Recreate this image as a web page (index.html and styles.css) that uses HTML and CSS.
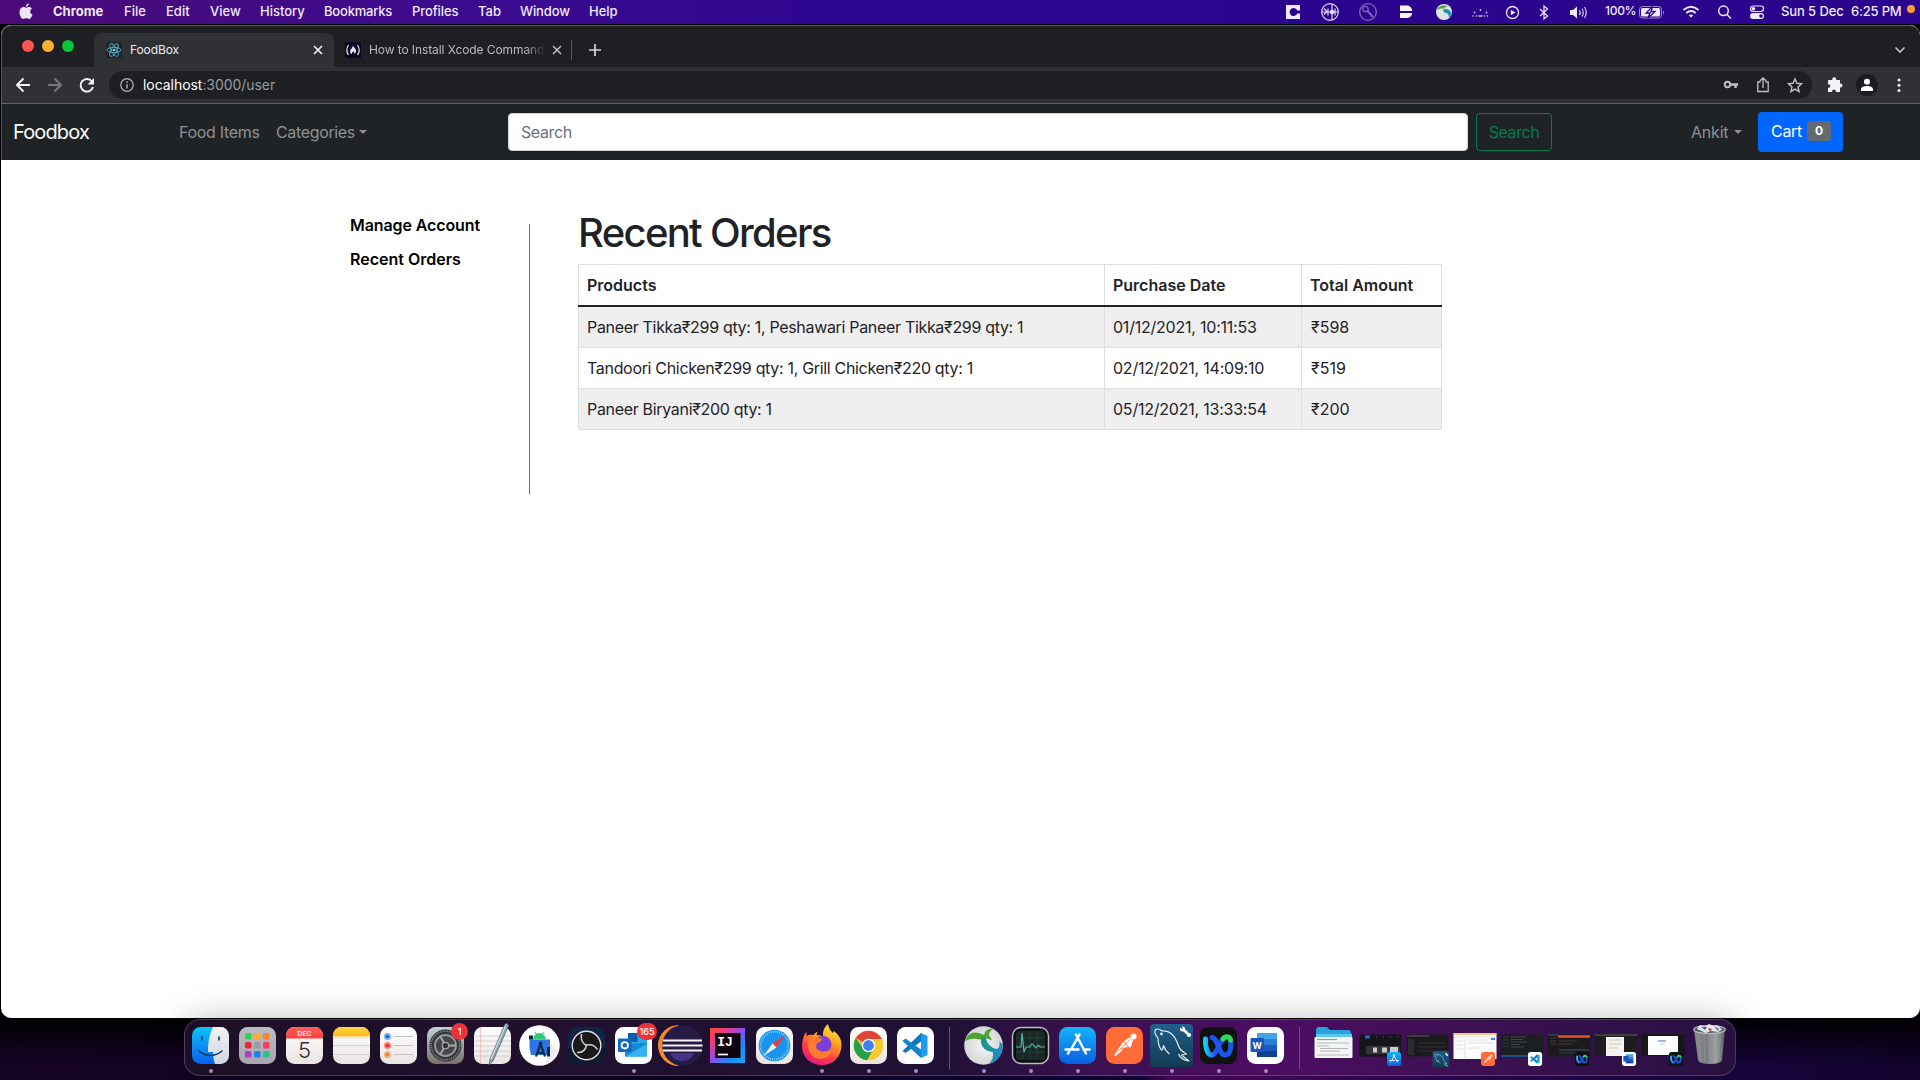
FILE: index.html
```html
<!DOCTYPE html>
<html lang="en">
<head>
<meta charset="utf-8">
<title>FoodBox</title>
<link rel="stylesheet" href="styles.css">
</head>
<body>
<svg class="defs" width="0" height="0">
  <defs>
    <linearGradient id="gFinder" x1="0" y1="0" x2="0" y2="1"><stop offset="0" stop-color="#0bc4fb"/><stop offset="1" stop-color="#0a5ff0"/></linearGradient>
    <linearGradient id="gFace" x1="0" y1="0" x2="0" y2="1"><stop offset="0" stop-color="#f2f3f5"/><stop offset="1" stop-color="#cfd6e0"/></linearGradient>
    <linearGradient id="gLaunch" x1="0" y1="0" x2="0" y2="1"><stop offset="0" stop-color="#bcbac2"/><stop offset="1" stop-color="#a9a5b2"/></linearGradient>
    <linearGradient id="gPaper" x1="0" y1="0" x2="0" y2="1"><stop offset="0" stop-color="#fff"/><stop offset="1" stop-color="#e9e4e2"/></linearGradient>
    <linearGradient id="gYellow" x1="0" y1="0" x2="0" y2="1"><stop offset="0" stop-color="#fdd33f"/><stop offset="1" stop-color="#fbb81b"/></linearGradient>
    <linearGradient id="gRed" x1="0" y1="0" x2="0" y2="1"><stop offset="0" stop-color="#ff5d57"/><stop offset="1" stop-color="#fb403f"/></linearGradient>
    <linearGradient id="gGear" x1="0" y1="0" x2="0" y2="1"><stop offset="0" stop-color="#c3d2d9"/><stop offset="1" stop-color="#77716b"/></linearGradient>
    <linearGradient id="gPen" x1="0" y1="0" x2="1" y2="1"><stop offset="0" stop-color="#c9d6dc"/><stop offset="1" stop-color="#5d7380"/></linearGradient>
    <linearGradient id="gStore" x1="0" y1="0" x2="0" y2="1"><stop offset="0" stop-color="#14b4fa"/><stop offset="1" stop-color="#0a5fe0"/></linearGradient>
    <linearGradient id="gIj" x1="0" y1="0" x2="1" y2="1"><stop offset="0" stop-color="#fb4a2f"/><stop offset=".25" stop-color="#f23a86"/><stop offset=".5" stop-color="#8a4df0"/><stop offset=".75" stop-color="#1592f7"/><stop offset="1" stop-color="#1fa2f8"/></linearGradient>
    <linearGradient id="gFox" x1=".8" y1="0" x2=".3" y2="1"><stop offset="0" stop-color="#fff04b"/><stop offset=".35" stop-color="#ffa51f"/><stop offset=".7" stop-color="#fb3f45"/><stop offset="1" stop-color="#e31587"/></linearGradient>
    <linearGradient id="gSql" x1="0" y1="0" x2="0" y2="1"><stop offset="0" stop-color="#20608a"/><stop offset="1" stop-color="#123a53"/></linearGradient>
    <linearGradient id="gWx" x1="0" y1="0" x2="1" y2="0"><stop offset="0" stop-color="#16c8f5"/><stop offset=".5" stop-color="#1c56f0"/><stop offset="1" stop-color="#1b3fe0"/></linearGradient>
    <linearGradient id="gBin" x1="0" y1="0" x2="1" y2="0"><stop offset="0" stop-color="#8c8d90"/><stop offset=".4" stop-color="#7b7c7f"/><stop offset=".7" stop-color="#a0a1a3"/><stop offset="1" stop-color="#5b5c60"/></linearGradient>
    <radialGradient id="gGlobe"><stop offset="0" stop-color="#f5f6f4"/><stop offset="1" stop-color="#d3d7d6"/></radialGradient>

    <g id="storeMark" fill="none" stroke="#fff" stroke-width="2.4" stroke-linecap="round"><path d="M22 15.500 32 34.500M25.500 15.500 17 30.500M11.500 30.500H24.500M29.500 30.500H35.500M14 34.500 15 33"/></g>
    <g id="postman"><circle cx="32.500" cy="17.500" r="3" fill="#fff"/><path d="m13 36.500 9-13.500 6-4.500 4 2.500-2 7-6.500 1-8.500 8z" fill="#fff"/><path d="m17 32.500 12-12M19.500 30.500l8-2.500M23 23l4.500 5" stroke="#ff6c37" fill="none" stroke-width=".9"/></g>
    <g id="vsMark"><path d="M29 14 35.500 17v19L29 39z" fill="#1f9cf0"/><path d="M29 14v8.500L13.500 34 10.500 32z" fill="#0f77bd"/><path d="M29 39v-8.500L13.500 19.500 10.500 22z" fill="#1184d0"/></g>
    <g id="webexMark" fill="none" stroke-linecap="round"><path d="M10.500 20C10 27 12 36 17 36s7.500-15 13-17.500" stroke="url(#gWx)" stroke-width="5"/><path d="M17 18.500C23 19 24 36 30 36s6.500-9 5.500-15" stroke="#1b57ee" stroke-width="5"/><path d="M28 20c2.500-3.500 7-2.500 7.500 1" stroke="#2edb5b" stroke-width="5"/></g>
    <g id="dolphin" fill="none" stroke="#dfeaf1" stroke-width="1.200" stroke-linejoin="round"><path d="M10 19C7 16 6 12 7.500 10.500c2-1 5 0 6.500 1.500 7-1 12 4 15 11 1 3 2 6 4 8 2 2 4 3 5.500 4l-5 1 7.500 6c-6-1-9-3-10.500-7M10 19c0 4 1 9 3.500 12 1 .5 1.500-2 2-4.500 1 3.500 3 6 6 8.500"/><circle cx="13.500" cy="15" r=".8"/></g>
    <g id="wordMark"><path d="M15 14h20v6H15z" fill="#41a5ee"/><path d="M15 20h20v6H15z" fill="#2b7cd3"/><path d="M15 26h20v6H15z" fill="#185abd"/><path d="M15 32h20v6H15z" fill="#103f91"/><rect x="8.500" y="19" width="13.500" height="14" rx="1" fill="#1b55b5"/></g>
  </defs>
</svg>

<header class="menubar">
  <svg class="apple" viewBox="0 0 14 17" width="14" height="17"><path d="M9.800.5c.1 1.700-1.300 3.200-2.900 3.200C6.700 2.100 8.200.6 9.800.5zM7 4.800c.7 0 1.600-.8 3-.8 1.200 0 2.400.6 3 1.600-2.600 1.500-2.200 5 .5 6.100-.6 1.800-2 4.300-3.500 4.300-1.100 0-1.500-.7-2.900-.7-1.400 0-1.800.7-2.900.7C2.500 16 .5 12.400.5 9.300.5 6 2.600 4.100 4.600 4.100c1.100 0 1.900.7 2.400.7z" fill="#ece6f4"/></svg>
  <nav class="menus">
    <b class="m-chrome">Chrome</b><span class="m-file">File</span><span class="m-edit">Edit</span><span class="m-view">View</span><span class="m-history">History</span><span class="m-book">Bookmarks</span><span class="m-prof">Profiles</span><span class="m-tab">Tab</span><span class="m-win">Window</span><span>Help</span>
  </nav>
  <svg class="status" viewBox="1280 0 320 24" width="320" height="24">
    <rect x="1286" y="5" width="14" height="14" fill="#efeaf7"/><path d="M1300 10.500h-2.700a4 4 0 1 0 0 3h2.700" fill="#2c0491"/>
    <g fill="none" stroke="#e4dcf2" stroke-width="1.200"><circle cx="1330" cy="12" r="8.300"/><path d="M1332 4v16M1322 12h16M1324 8.500l3 3-3 3M1328 8.500v7M1335 8.500v7"/><circle cx="1332" cy="12" r="1.600" fill="#e4dcf2"/></g>
    <g fill="none" stroke="#8065bd" stroke-width="1.300"><circle cx="1368" cy="12" r="8.300"/><circle cx="1365.500" cy="9" r="2.700"/><path d="m1367.500 11 5.500 6" stroke-width="2"/></g>
    <path d="M1400 5.500h6.500c3 0 5.500 2 5.700 5.500H1400zM1400 13h12.200c-.3 3-2.700 5-5.700 5h-6.500z" fill="#f6f2fb"/>
    <circle cx="1444" cy="12" r="8" fill="#dde4e3"/><path d="M1437 10c1-4 7-6 11-3-3-1-4 1-4 2-3-1-5 0-7 1z" fill="#4fa637"/><path d="M1443 10c2-2 7-1 8 3 0 2-1 4-2 5 0-3-1-5-3-5-1 0-3-2-3-3z" fill="#1e8dba"/>
    <g fill="#d4c9ea"><circle cx="1473" cy="16" r=".8"/><circle cx="1476.500" cy="16" r=".8"/><path d="M1478.500 15.300h4v1.400h-4z"/><circle cx="1484.500" cy="16" r=".8"/><circle cx="1487.500" cy="16" r=".8"/><circle cx="1474.500" cy="12.500" r=".9"/><circle cx="1486.500" cy="12.500" r=".9"/><circle cx="1480.500" cy="10" r=".9"/></g>
    <circle cx="1512.500" cy="12.500" r="6" fill="none" stroke="#eee8f7" stroke-width="1.300"/><path d="m1510.800 9.700 4.600 2.800-4.600 2.800z" fill="#eee8f7"/>
    <path d="m1540 9 7.500 7-3.500 3V6l3.500 3-7.500 7" fill="none" stroke="#eee8f7" stroke-width="1.200"/>
    <path d="M1570 10h3l4-3.500v12l-4-3.500h-3z" fill="#eee8f7"/><path d="M1579.500 10q1.500 2.500 0 5M1582 8.500q2.500 4 0 8M1584.500 7q3.500 5.500 0 11" fill="none" stroke="#cfc3e8" stroke-width="1.200"/>
  </svg>
  <span class="pct">100%</span>
  <svg class="status2" viewBox="1638 0 134 24" width="134" height="24">
    <rect x="1639.500" y="6.500" width="22" height="11.500" rx="3" fill="none" stroke="#a18bd0"/><rect x="1641" y="8" width="19" height="8.500" rx="1.500" fill="#efe9f7"/><path d="M1663 10.500q2 2 0 4" fill="#a18bd0"/><path d="m1652.500 6.500-6.500 6.500h4l-2 5 7-6.500h-4z" fill="#efe9f7" stroke="#2b048f" stroke-width="1.300"/>
    <g fill="none" stroke="#eee8f7" stroke-width="2"><path d="M1683.500 10q7.500-6.500 15 0M1686.300 13q4.700-4 9.400 0"/></g><path d="m1688.800 15.300 2.200 2.500 2.200-2.500q-2.200-1.700-4.400 0z" fill="#eee8f7"/>
    <g fill="none" stroke="#eee8f7" stroke-width="1.500"><circle cx="1723.500" cy="10.800" r="4.800"/><path d="m1727 14.500 4 4"/></g>
    <rect x="1750.500" y="6" width="13" height="5.500" rx="2.700" fill="none" stroke="#eee8f7" stroke-width="1.200"/><circle cx="1753.500" cy="8.700" r="1.800" fill="#eee8f7"/><rect x="1750" y="13" width="14" height="6" rx="3" fill="#eee8f7"/><circle cx="1761" cy="16" r="1.800" fill="#2b048f"/>
  </svg>
  <span class="date">Sun 5 Dec</span><span class="time">6:25 PM</span><i class="rec"></i>
</header>

<main class="window">
  <div class="tabstrip">
    <div class="lights"><i class="red"></i><i class="amber"></i><i class="green"></i></div>
    <div class="tab">
      <svg viewBox="0 0 16 16" width="16" height="16"><rect width="16" height="16" rx="2" fill="#20232a"/><g fill="none" stroke="#4fb3cb" stroke-width=".9"><ellipse cx="8" cy="8" rx="7" ry="2.700"/><ellipse cx="8" cy="8" rx="7" ry="2.700" transform="rotate(60 8 8)"/><ellipse cx="8" cy="8" rx="7" ry="2.700" transform="rotate(120 8 8)"/></g><circle cx="8" cy="8" r="1.300" fill="#7fdcf0"/></svg>
      <span class="tab-title">FoodBox</span>
      <svg class="x" viewBox="0 0 10 10" width="10" height="10"><path d="m1 1 8 8M9 1 1 9" stroke="#f1f3f4" stroke-width="1.600"/></svg>
    </div>
    <div class="tab2">
      <svg viewBox="0 0 16 16" width="16" height="16"><rect width="16" height="16" fill="#0a0a23"/><path d="M3.500 3Q0 8 3.500 13M12.500 3Q16 8 12.500 13" fill="none" stroke="#e8e8ee" stroke-width="1.200"/><path d="M8 3.500c.3 2 3 3 3 5.500 0 1.500-.8 2.500-1.700 3 .4-1.500-.3-2-1-2.800-.7 1-1.800 1.600-1.300 2.800C5.500 11.500 5 10.500 5.200 9c.2-2 2.300-2.500 2.800-5.500z" fill="#e8e8ee"/></svg>
      <span class="tab-title">How to Install Xcode Command</span>
      <svg class="x" viewBox="0 0 10 10" width="10" height="10"><path d="m1 1 8 8M9 1 1 9" stroke="#bdc1c6" stroke-width="1.500"/></svg>
    </div>
    <i class="tab-sep"></i>
    <svg class="plus" viewBox="0 0 12 12" width="12" height="12"><path d="M6 0v12M0 6h12" stroke="#d5d7da" stroke-width="1.700"/></svg>
    <svg class="chev" viewBox="0 0 12 8" width="12" height="8"><path d="m1.500 1.500 4.500 4.500 4.500-4.500" fill="none" stroke="#bdc1c6" stroke-width="1.700"/></svg>
  </div>
  <div class="toolbar">
    <svg class="ctl" viewBox="14 74 82 22" width="82" height="22" fill="none" stroke-width="2">
      <path d="M30 85H17M23.500 78.500 17 85l6.500 6.500" stroke="#f1f3f4"/><path d="M48 85h13M54.500 78.500 61 85l-6.500 6.500" stroke="#77797d"/><path d="M92 81.500A6.300 6.300 0 1 0 93 87" stroke="#f1f3f4"/><path d="M94 78v6.500h-6.500z" fill="#f1f3f4"/></svg>
    <div class="omnibox">
      <svg viewBox="0 0 14 14" width="14" height="14"><circle cx="7" cy="7" r="6.200" fill="none" stroke="#a0a4a9" stroke-width="1.400"/><path d="M6.200 6.200h1.600v4.300H6.200zM6.200 3.500h1.600v1.600H6.200z" fill="#a0a4a9"/></svg>
      <span class="url"><b>localhost</b>:3000/user</span>
      <svg class="omni-icons" viewBox="1722 75 82 20" width="82" height="20" fill="none" stroke="#bdc1c6" stroke-width="1.500">
        <circle cx="1727.500" cy="84.500" r="2.700" stroke-width="2"/><path d="M1730 84.500h8M1735.500 85v3" stroke-width="2.500"/>
        <path d="M1760.500 82h-2.700v9.500h10.400V82h-2.700M1763 88v-9.500M1759.800 81l3.200-3 3.200 3" stroke-width="1.300"/>
        <path d="m1795 79 1.900 4.300 4.600.5-3.500 3.100 1 4.600-4-2.400-4 2.400 1-4.600-3.500-3.100 4.600-.5z" stroke-width="1.400"/>
      </svg>
    </div>
    <svg class="ext" viewBox="1826 73 80 24" width="80" height="24"><path d="M1829 80h3.300c-.5-3.600 4.400-3.600 3.900 0h3.800v3.600c3.300-.3 3.300 4.300 0 4V92h-4c0-3.300-4-3.300-4 0h-4v-4.200c3.200.2 3.200-3.800 0-3.600V81q0-1 1-1z" fill="#f1f3f4"/><circle cx="1867" cy="85" r="11" fill="#1b1c1f"/><circle cx="1867" cy="81.800" r="3" fill="#fff"/><path d="M1861 91v-1.700c0-2.600 3.500-3.300 6-3.300s6 .7 6 3.300V91z" fill="#fff"/><g fill="#f1f3f4"><circle cx="1899" cy="80" r="1.500"/><circle cx="1899" cy="85.300" r="1.500"/><circle cx="1899" cy="90.600" r="1.500"/></g></svg>
  </div>

  <div class="navbar">
    <span class="brand">Foodbox</span>
    <span class="link food">Food Items</span>
    <span class="link cats">Categories</span><i class="caret"></i>
    <div class="search">Search</div>
    <div class="search-btn">Search</div>
    <span class="link ankit">Ankit</span><i class="caret"></i>
    <div class="cart"><span>Cart</span><b>0</b></div>
  </div>

  <div class="page">
    <aside><b class="s1">Manage Account</b><b class="s2">Recent Orders</b></aside>
    <section>
      <h1>Recent Orders</h1>
      <table>
        <colgroup><col class="c1"><col class="c2"><col class="c3"></colgroup>
        <thead><tr><th>Products</th><th>Purchase Date</th><th>Total Amount</th></tr></thead>
        <tbody>
          <tr><td>Paneer Tikka₹299 qty: 1, Peshawari Paneer Tikka₹299 qty: 1</td><td>01/12/2021, 10:11:53</td><td>₹598</td></tr>
          <tr><td>Tandoori Chicken₹299 qty: 1, Grill Chicken₹220 qty: 1</td><td>02/12/2021, 14:09:10</td><td>₹519</td></tr>
          <tr><td>Paneer Biryani₹200 qty: 1</td><td>05/12/2021, 13:33:54</td><td>₹200</td></tr>
        </tbody>
      </table>
    </section>
  </div>
</main>

<footer class="dock">
  <div class="app on"><svg viewBox="0 0 47 56"><rect x="5" y="8" width="37" height="37" rx="8.500" fill="url(#gFinder)"/><path d="M26 8h7.500A8.500 8.500 0 0 1 42 16.500v20a8.500 8.500 0 0 1-8.500 8.500H28c-1.500-4-2-8-2-12h-5c0-10 1.500-18 5-25z" fill="url(#gFace)"/><path d="M15 18v3M32 18v3" stroke="#143250" stroke-width="1.600" stroke-linecap="round"/><path d="M12 32q11.500 9 23 0" fill="none" stroke="#143250" stroke-width="1.500" stroke-linecap="round"/></svg></div>
  <div class="app"><svg viewBox="0 0 47 56"><rect x="5" y="8" width="37" height="37" rx="8.500" fill="url(#gLaunch)"/><rect x="11" y="14" width="6.500" height="6.500" rx="1.500" fill="#2bd856"/><rect x="20" y="14" width="6.500" height="6.500" rx="1.500" fill="#fdae2c"/><rect x="29" y="14" width="6.500" height="6.500" rx="1.500" fill="#fb8526"/><rect x="11" y="23" width="6.500" height="6.500" rx="1.500" fill="#e52a37"/><rect x="20" y="23" width="6.500" height="6.500" rx="1.500" fill="#969ba6"/><rect x="29" y="23" width="6.500" height="6.500" rx="1.500" fill="#fb3a5e"/><rect x="11" y="32" width="6.500" height="6.500" rx="1.500" fill="#a640c4"/><rect x="20" y="32" width="6.500" height="6.500" rx="1.500" fill="#1686ee"/><rect x="29" y="32" width="6.500" height="6.500" rx="1.500" fill="#20c68b"/></svg></div>
  <div class="app"><svg viewBox="0 0 47 56"><rect x="5" y="8" width="37" height="37" rx="8.500" fill="url(#gPaper)"/><path d="M5 19.500v-3A8.500 8.500 0 0 1 13.500 8h20a8.500 8.500 0 0 1 8.500 8.500v3z" fill="url(#gRed)"/><text x="23.500" y="16.800" class="t-dec">DEC</text><text x="23.500" y="39" class="t-five">5</text></svg></div>
  <div class="app"><svg viewBox="0 0 47 56"><rect x="5" y="8" width="37" height="37" rx="8.500" fill="url(#gPaper)"/><path d="M5 17.500v-1A8.500 8.500 0 0 1 13.500 8h20a8.500 8.500 0 0 1 8.500 8.500v1z" fill="url(#gYellow)"/><path d="M5 19h37" stroke="#b9b4b0" stroke-dasharray="1 1" stroke-width=".7"/><path d="M5 26.500h37M5 35.500h37" stroke="#cfcac7" stroke-width=".8"/></svg></div>
  <div class="app"><svg viewBox="0 0 47 56"><rect x="5" y="8" width="37" height="37" rx="8.500" fill="url(#gPaper)"/><g stroke="#c4c2c2"><path d="M19 17.500h19M19 26.500h19M19 35.500h19"/></g><g fill="none" stroke-width=".7"><circle cx="12.500" cy="17.500" r="3.200" stroke="#2a82e4"/><circle cx="12.500" cy="26.500" r="3.200" stroke="#f4413d"/><circle cx="12.500" cy="35.500" r="3.200" stroke="#f29134"/></g><circle cx="12.500" cy="17.500" r="2.300" fill="#1673e6"/><circle cx="12.500" cy="26.500" r="2.300" fill="#f12e2e"/><circle cx="12.500" cy="35.500" r="2.300" fill="#f0852a"/></svg></div>
  <div class="app"><svg viewBox="0 0 47 56"><rect x="5" y="8" width="37" height="37" rx="8.500" fill="url(#gGear)"/><circle cx="23.500" cy="26.500" r="16" fill="#343638"/><circle cx="23.500" cy="26.500" r="14.300" fill="none" stroke="#85888b" stroke-width="1.500" stroke-dasharray="1.200 1"/><circle cx="23.500" cy="26.500" r="10.500" fill="#45474a" stroke="#97999b" stroke-width="1.800"/><path d="M23.500 26.500H34M23.500 26.500l-5.300 9M23.500 26.500l-5.300-9" stroke="#a5a7a9" stroke-width="2"/><circle cx="23.500" cy="26.500" r="3.200" fill="#303234" stroke="#a5a7a9" stroke-width="1.300"/></svg><b class="badge">1</b></div>
  <div class="app"><svg viewBox="0 0 47 56"><rect x="5" y="8" width="37" height="37" rx="8.500" fill="url(#gPaper)"/><path d="M5 17h37M5 22h37M5 27h37M5 32h37M5 37h37" stroke="#c9c7c8" stroke-width=".8"/><path d="M11.500 8v37" stroke="#f5b8b5" stroke-width=".8"/><path d="M36 5q3-1.500 3.500 2L24 42l-4 4 1-6z" fill="url(#gPen)" stroke="#4d606b" stroke-width=".7"/><path d="M36.500 7 22 40" stroke="#e9f1f4" stroke-width=".9"/></svg></div>
  <div class="app"><svg viewBox="0 0 47 56"><circle cx="23.500" cy="26.500" r="20.300" fill="#fff"/><path d="M29 46 42 32 34 24z" fill="#ededed"/><path d="M13.500 20.500H34v15.500H15l-1.500-7z" fill="#2f73e4"/><path d="M17 20.500a6.500 6.500 0 0 1 13 0z" fill="#36c878"/><path d="m19 13 2 3M28 13l-2 3" stroke="#36c878"/><path d="M13 16.500h4v4h-4zM31 28h3v9.500h-3z" fill="#0d2b3f"/><path d="m24.500 25 4.500 12.500M24.500 25 20 37.500M21 33q3.500 2 7 0" fill="none" stroke="#0d2b3f" stroke-width="2.200"/><circle cx="24.500" cy="24.500" r="2" fill="#0d2b3f"/></svg></div>
  <div class="app"><svg viewBox="0 0 47 56"><rect x="5" y="8" width="37" height="37" rx="8" fill="#132345"/><path d="M5 29h37v8q0 8-8 8H13q-8 0-8-8z" fill="#0e1b30"/><circle cx="23.500" cy="26.500" r="14.300" fill="#1b191b" stroke="#e4e2e4" stroke-width="1.400"/><g fill="none" stroke="#d2d0d2" stroke-width="1.500"><path d="M18.500 15q-1.500 8 5 11.500"/><path d="M23.500 26q7-1.500 11 4.500"/><path d="M23.500 26q-1.500 8-9.500 7.500"/></g></svg></div>
  <div class="app on"><svg viewBox="0 0 47 56"><rect x="5" y="8" width="37" height="37" rx="8.500" fill="#fff"/><path d="M18 14h19v18H18z" fill="#28a8ea"/><path d="M18 14h9.500v9H18z" fill="#0f5fb0"/><path d="M15 25l22-1v13.500H15z" fill="#1487d8"/><path d="M15 37.500 37 25v12.500z" fill="#34b4ef"/><rect x="8" y="19.500" width="13.500" height="13.500" rx="1" fill="#0f69bf"/><circle cx="14.800" cy="26.300" r="3.200" fill="none" stroke="#fff" stroke-width="1.800"/></svg><b class="badge wide">165</b></div>
  <div class="app"><svg viewBox="0 0 47 56"><path d="M21.500 6a20.500 20.500 0 0 0 0 41z" fill="#f6892e"/><circle cx="25.500" cy="26.500" r="20.300" fill="#251b44"/><path d="M13 34q3 8 12 8t12-8z" fill="#43358a"/><path d="M6 21.500h39M5.500 26.500h40M6 31.500h39" stroke="#f5f3f8" stroke-width="2"/></svg></div>
  <div class="app"><svg viewBox="0 0 47 56"><rect x="6" y="9" width="35" height="35" fill="url(#gIj)"/><rect x="11" y="14" width="25.500" height="25" fill="#100411"/><text x="13.200" y="27" class="t-ij">IJ</text><path d="M14 35.500h10" stroke="#fff" stroke-width="1.700"/></svg></div>
  <div class="app"><svg viewBox="0 0 47 56"><rect x="5" y="8" width="37" height="37" rx="8.500" fill="url(#gPaper)"/><circle cx="23.500" cy="26.500" r="15.800" fill="#1a94ee"/><circle cx="23.500" cy="26.500" r="13.800" fill="none" stroke="#bfe2fa" stroke-width="2" stroke-dasharray=".7 1.400"/><path d="M34.500 16 25.500 28.500l-4-4z" fill="#f23b36"/><path d="M12.500 37l9-12.500 4 4z" fill="#f2f3f5"/></svg></div>
  <div class="app on"><svg viewBox="0 0 47 56"><path d="M5 20q1-5 3.500-7v4q3-2 7-1 1-2 4-3.500L18.500 16q5 0 6.500 2-1-8 5-13 1 6 5 9l1-2q8 6 7.500 15C43 38 35 46 24 46 12 46 4 38 4 27q0-4 1-7z" fill="url(#gFox)"/><circle cx="25" cy="25.500" r="8.500" fill="#7a3fd6"/><path d="M13 18q7 0 11 2-1 3-5 4-3 5 3 8 8 2 12-4-1 12-12 12-10-1-12-12 0-6 3-10z" fill="#ff7c2c"/></svg></div>
  <div class="app on"><svg viewBox="0 0 47 56"><rect x="5" y="8" width="37" height="37" rx="8.500" fill="url(#gPaper)"/><circle cx="23.500" cy="26.500" r="14.800" fill="#fbc62f"/><path d="M23.500 26.500 10.700 19.100a14.800 14.800 0 0 1 25.600 0L37 20H23.500z" fill="#e04537"/><path d="M10.700 19.100a14.800 14.800 0 0 0 11.300 22.100L28.500 30 18 29z" fill="#26a048"/><circle cx="23.500" cy="26.500" r="6.800" fill="#fff"/><circle cx="23.500" cy="26.500" r="5.400" fill="#3f80ee"/></svg></div>
  <div class="app on"><svg viewBox="0 0 47 56"><rect x="5" y="8" width="37" height="37" rx="8.500" fill="#fff"/><use href="#vsMark"/></svg></div>
  <i class="sep"></i>
  <div class="app on"><svg viewBox="0 0 47 56"><circle cx="23.500" cy="26.500" r="19.300" fill="url(#gGlobe)"/><path d="M5 22C8 12 17 12 24 16q1-7 10-6.500-5 2-5 7 2 2 3 5-7-4-12-1-8-2-15 1.500z" fill="#4fa437"/><path d="M21 19q-1 10 7 13 4 1 5 1 1 7-4 12 8-3 10-7 4-6 3.500-13-2-1-3-3 1 7-3 8-9-2-11-12z" fill="#1b8dc1"/><path d="M21 19q2-2 4-1 0 8 8 12l-2 2q-9-2-10-13z" fill="#23967c"/></svg></div>
  <div class="app on"><svg viewBox="0 0 47 56"><rect x="5.500" y="8.500" width="36" height="36" rx="8.500" fill="#0b0f0e" stroke="#b3bdc0" stroke-width="1.500"/><rect x="9" y="12" width="29" height="29" rx="3.500" fill="#1b2926"/><path d="M9 19h29M9 26h29M9 33h29M16 12v29M23 12v29M30 12v29" stroke="#2c4440" stroke-width=".6"/><path d="M9 28h5l1-14 2 19 2-5h4q2-6 4-1l2 2 2-3 2 2h5" fill="none" stroke="#55bfa3" stroke-width="1.100"/></svg></div>
  <div class="app on"><svg viewBox="0 0 47 56"><rect x="5" y="8" width="37" height="37" rx="8.500" fill="url(#gStore)"/><use href="#storeMark"/></svg></div>
  <div class="app on"><svg viewBox="0 0 47 56"><rect x="5" y="8" width="37" height="37" rx="8.500" fill="#ff6c37"/><use href="#postman"/></svg></div>
  <div class="app on"><svg viewBox="0 0 47 56"><rect x="2" y="5" width="43" height="43" rx="4" fill="url(#gSql)"/><use href="#dolphin"/><path d="m35 10 6 6" stroke="#fff" stroke-width="2.600"/><circle cx="34.500" cy="10" r="2.500" fill="#fff"/><circle cx="41" cy="16" r="2" fill="#fff"/><path d="m32 7 2.500 2.500" stroke="#1e5b84" stroke-width="1.500"/></svg></div>
  <div class="app on"><svg viewBox="0 0 47 56"><rect x="5" y="8" width="37" height="37" rx="8" fill="#111"/><use href="#webexMark"/></svg></div>
  <div class="app on"><svg viewBox="0 0 47 56"><rect x="5" y="8" width="37" height="37" rx="8.500" fill="#fff"/><use href="#wordMark"/><text x="15.200" y="29.500" class="t-word">W</text></svg></div>
  <i class="sep"></i>
  <div class="app"><svg viewBox="0 0 47 56"><path d="M6 30V12q0-4 3-4h8l3 3h18q3 0 3 3v16z" fill="#26a3dc"/><path d="M6 15h36v5H6z" fill="#5cc6f0"/><rect x="4.500" y="18" width="38" height="21" rx="1" fill="#f3f5f5"/><path d="M7 20.500h20" stroke="#59b5b5" stroke-width="1.200"/><path d="M7 24h32M7 27h12M10 29.500h28M10 32h20M7 36h32" stroke="#a4a7a9" stroke-width=".8"/></svg></div>
  <div class="app"><svg viewBox="0 0 47 56"><rect x="2.500" y="15.500" width="42" height="22" fill="#15161a"/><path d="M8 18h5" stroke="#2b66d8" stroke-width="3"/><path d="M19 18h23" stroke="#3b3c44" stroke-dasharray="1 6" stroke-width="2"/><path d="M9 27h34v8H9z" fill="#34343b"/><path d="M16 28.500h4v5h-4zM25 28.500h5v5h-5zM33 28h8v6h-8z" fill="#cfc9c8"/><g transform="translate(28.100 29.900) scale(.38)"><rect x="5" y="8" width="37" height="37" rx="7" fill="url(#gStore)"/><use href="#storeMark"/></g></svg></div>
  <div class="app"><svg viewBox="0 0 47 56"><rect x="2.500" y="15.500" width="42" height="22" fill="#1a1b1d"/><path d="M3 17h22" stroke="#494a4d" stroke-width="1.500"/><path d="M14 24h28M14 28h28M14 32h28" stroke="#303135"/><path d="M7 20v16" stroke="#2c2d30" stroke-width="6"/><g transform="translate(28.200 31) scale(.38)"><rect x="1" y="3" width="43" height="43" rx="4" fill="url(#gSql)"/><use href="#dolphin"/><path d="m35 9 6 6" stroke="#fff" stroke-width="4"/></g></svg></div>
  <div class="app"><svg viewBox="0 0 47 56"><rect x="2.500" y="14" width="43" height="26" fill="#fcfbfb"/><path d="M2.500 15h43" stroke="#f3b467" stroke-width="1.500"/><path d="M3 18h42M14 20v19M5 22h7M5 26h7M5 30h7M17 21h20M17 24h26M17 29h12" stroke="#dcdcde" stroke-width=".8"/><path d="M40 20h4" stroke="#3b86ef" stroke-width="2"/><g transform="translate(28.100 29.900) scale(.38)"><rect x="5" y="8" width="37" height="37" rx="7" fill="#ff6c37"/><use href="#postman"/></g></svg></div>
  <div class="app"><svg viewBox="0 0 47 56"><rect x="2.500" y="15.500" width="43" height="22" fill="#1c1f22"/><path d="M3 37h42" stroke="#16639c" stroke-width="1.300"/><path d="M13 18h15M13 20.500h12M13 23h16M13 25.500h9M13 28h13" stroke="#47544c" stroke-width=".8"/><path d="M5 18h6M5 21h6M5 24h6M5 27h6" stroke="#393c3f" stroke-width=".8"/><g transform="translate(28.100 29.900) scale(.38)"><rect x="5" y="8" width="37" height="37" rx="7" fill="#fff"/><use href="#vsMark"/></g></svg></div>
  <div class="app"><svg viewBox="0 0 47 56"><rect x="2.500" y="15.500" width="43" height="22" fill="#1c1a1c"/><path d="M13 17.500h32" stroke="#de552d" stroke-width="2.500"/><path d="M3 16h10M14 31h30" stroke="#327190" stroke-width=".8"/><path d="M5 19h6M5 22h6M5 25h6M14 22h18M14 25h14M14 34h18" stroke="#484447" stroke-width=".8"/><g transform="translate(28.100 29.900) scale(.38)"><rect x="5" y="8" width="37" height="37" rx="7" fill="#111"/><use href="#webexMark"/></g></svg></div>
  <div class="app"><svg viewBox="0 0 47 56"><rect x="2.500" y="15" width="43" height="22" fill="#1d1d1f"/><path d="M3 16h42" stroke="#4d4d50" stroke-width="1.500"/><rect x="14" y="18" width="18" height="19" fill="#f4f3f1"/><path d="M17 21h12M17 25h12M17 29h9" stroke="#cfc4ab" stroke-width="1.200"/><g transform="translate(28.100 29.900) scale(.38)"><rect x="5" y="8" width="37" height="37" rx="7" fill="#fff"/><use href="#wordMark"/></g></svg></div>
  <div class="app"><svg viewBox="0 0 47 56"><rect x="2.500" y="15" width="43" height="22" fill="#17171a"/><rect x="9" y="17" width="30" height="19" fill="#fdfdfd"/><path d="M19 22h8" stroke="#5b8cdc" stroke-width="1.200"/><path d="M21 25h5" stroke="#c3ccdd"/><g transform="translate(28.100 29.900) scale(.38)"><rect x="5" y="8" width="37" height="37" rx="7" fill="#111"/><use href="#webexMark"/></g></svg></div>
  <div class="app"><svg viewBox="0 0 47 56"><path d="m8 10 4 31q1 4 12 4t12-4l3-31z" fill="url(#gBin)"/><path d="m12 14 3 27M18 15l1 28M24 15v29M30 15l-1 28M35 14l-3 27" stroke="#a5a6a8" stroke-width=".4"/><ellipse cx="23.500" cy="10.500" rx="15.800" ry="4" fill="#58595c" stroke="#b9babd" stroke-width="1.200"/><path d="m11 10 3-4 5 1.500 4-2.500 5 2 3-1 5 4.500-4 2.500-7-1-5 2z" fill="#e6e6e8"/><path d="m15 8 4 3 2-3M28 7l5 3-1 2z" fill="#3d6f96"/><path d="m22 9 4 1-2 3z" fill="#c0492c"/></svg></div>
</footer>
</body>
</html>
```

FILE: styles.css
```css
* { box-sizing: border-box; }
html, body { margin: 0; height: 1080px; overflow: hidden; }
body {
  width: 1920px;
  display: flex;
  flex-direction: column;
  font-family: Inter, "Liberation Sans", sans-serif;
  color: #1f2326;
  background:
    linear-gradient(180deg, #000 1018px, rgba(0, 0, 0, 0) 1065px),
    linear-gradient(90deg, #160426 0, #0d0222 600px, #10033a 1140px, #4d0760 1170px, #35075a 1400px, #1a0540 1700px, #12022c 1920px);
}
svg { display: block; flex: none; }
.defs { position: absolute; }

.menubar {
  height: 24px;
  flex: none;
  display: flex;
  align-items: center;
  background: linear-gradient(90deg, #4b0a78 0, #3a0b8f 500px, #2c058f 900px, #2a048d 1920px);
  color: #efe9f6;
  font-size: 13px;
  font-weight: 500;
  line-height: 22px;
  white-space: nowrap;
}
.apple { margin: 0 0 2px 19px; }
.menus { display: flex; flex: none; width: 1247px; padding-left: 20px; }
.menus, .pct, .date, .time { padding-bottom: 2px; }
.m-chrome { width: 71px; font-weight: 700; }
.m-file { width: 42px; }
.m-edit { width: 44px; }
.m-view { width: 50px; }
.m-history { width: 64px; }
.m-book { width: 88px; letter-spacing: -.2px; }
.m-prof { width: 66px; letter-spacing: -.1px; }
.m-tab { width: 42px; }
.m-win { width: 69px; letter-spacing: -.1px; }
.pct { width: 38px; padding-left: 5px; font-size: 12px; letter-spacing: -.3px; }
.date { width: 70px; margin-left: 9px; letter-spacing: -.1px; }
.time { width: 56px; letter-spacing: -.2px; }
.rec { width: 8px; height: 8px; border-radius: 50%; background: #ff9a2c; margin-bottom: 6px; }

.window {
  flex: none;
  width: 1919px;
  height: 993px;
  margin: 1px 0 0 1px;
  border-radius: 10px;
  overflow: hidden;
  background: #fff;
}
.tabstrip {
  height: 42px;
  background: #1e1f22;
  border: solid #58595c;
  border-width: 1px 0 0 1px;
  border-radius: 10px 10px 0 0;
  display: flex;
  align-items: flex-end;
}
.lights { width: 92px; height: 41px; display: flex; gap: 8px; padding: 14px 0 0 20px; }
.lights i { width: 12px; height: 12px; border-radius: 50%; }
.red { background: #ff5750; }
.amber { background: #ffb02e; }
.green { background: #0ac43c; }
.tab, .tab2 { height: 34px; display: flex; align-items: center; font-size: 12px; color: #e8eaed; }
.tab { width: 240px; padding: 0 11px 0 12px; border-radius: 8px 8px 0 0; background: #303135; }
.tab2 { width: 237px; padding: 0 9px 0 11px; color: #b8bbc0; }
.tab-title { margin: 0 0 2px 8px; white-space: nowrap; }
.tab .tab-title { letter-spacing: -.1px; }
.tab2 .tab-title {
  width: 175px;
  letter-spacing: -.09px;
  -webkit-mask-image: linear-gradient(90deg, #000 155px, transparent 177px);
  mask-image: linear-gradient(90deg, #000 155px, transparent 177px);
}
.x { margin-left: auto; }
.tab-sep { width: 1px; height: 20px; margin-bottom: 7px; background: #55575b; }
.plus { margin: 0 0 11px 17px; }
.chev { margin: 0 14px 13px auto; }

.toolbar {
  height: 37px;
  display: flex;
  align-items: center;
  background: #303135;
  border-bottom: 1px solid #606164;
  border-left: 1px solid #58595c;
}
.ctl { margin-left: 12px; }
.omnibox {
  width: 1703px;
  height: 28px;
  margin-left: 13px;
  padding: 0 8px 0 11px;
  border-radius: 14px;
  background: #1e1f22;
  display: flex;
  align-items: center;
}
.url { margin: 0 0 2px 9px; font-size: 14px; letter-spacing: -.05px; color: #96999e; }
.url b { font-weight: 400; color: #fff; }
.omni-icons { margin-left: auto; }
.ext { margin-left: 14px; }

.navbar {
  height: 56px;
  background: #1f2326;
  border-left: 1px solid #4d5053;
  display: flex;
  align-items: center;
  font-size: 16px;
}
.brand { flex: none; width: 177px; padding-left: 11px; font-size: 20px; color: #fff; letter-spacing: -.85px; }
.link { color: #8f9193; }
.food { flex: none; width: 97px; letter-spacing: -.3px; }
.cats { flex: none; width: 80px; letter-spacing: -.35px; }
.caret { border: 4.800px solid transparent; border-top-color: #8f9193; border-bottom: 0; margin-left: 3px; }
.search {
  flex: none;
  width: 960px;
  height: 38px;
  margin-left: 141px;
  padding: 0 12px;
  line-height: 36px;
  border: 1px solid #ced4da;
  border-radius: 4px;
  background: #fff;
  color: #66717a;
  letter-spacing: -.4px;
}
.search-btn {
  flex: none;
  width: 76px;
  height: 38px;
  margin-left: 8px;
  line-height: 36px;
  text-align: center;
  border: 1px solid #007c4e;
  border-radius: 4px;
  color: #007c4e;
  letter-spacing: -.4px;
}
.ankit { flex: none; width: 41px; margin-left: 139px; letter-spacing: -.2px; }
.ankit + .caret { margin-left: 2px; }
.cart {
  flex: none;
  width: 85px;
  height: 40px;
  margin-left: 16px;
  padding: 0 12px 2px 13px;
  border-radius: 4px;
  background: #0066fd;
  color: #fff;
  letter-spacing: -.3px;
  display: flex;
  align-items: center;
  justify-content: space-between;
}
.cart b { width: 24px; height: 20px; border-radius: 4px; background: #636b70; font-size: 12px; line-height: 20px; text-align: center; letter-spacing: 0; }

.page { height: 858px; padding-left: 349px; display: flex; align-items: flex-start; }
aside {
  width: 180px;
  height: 270px;
  margin-top: 64px;
  border-right: 1px solid #6f7072;
  display: flex;
  flex-direction: column;
  font-size: 16px;
  line-height: 24px;
  color: #000;
}
aside b { font-weight: 600; }
.s1 { margin: -11px 0 10px; letter-spacing: -.1px; }
section { margin: 49px 0 0 48px; width: 864px; }
h1 { margin: 0 0 7px; font-size: 40px; line-height: 48px; font-weight: 500; letter-spacing: -1.680px; }
table { width: 864px; table-layout: fixed; border-collapse: collapse; font-size: 16px; line-height: 24px; }
.c1 { width: 526px; }
.c2 { width: 197px; }
.c3 { width: 140px; }
th, td { height: 41px; padding: 8px; text-align: left; border: 1px solid #dbdfe3; white-space: nowrap; }
th { font-weight: 600; }
td:nth-child(1) { letter-spacing: -.32px; }
td:nth-child(2) { letter-spacing: -.22px; }
td:nth-child(3) { padding-left: 9px; }
thead { border-bottom: 2px solid #1f2326; }
tbody tr:nth-child(odd) { background: #efefef; }

.dock {
  width: 1552px;
  height: 57px;
  margin: 1px 0 0 184px;
  padding: 0 2px;
  flex: none;
  display: flex;
  position: relative;
  border: 1px solid rgba(150, 120, 170, .4);
  border-radius: 16px;
  background: linear-gradient(90deg, #1c1026 0, #21102e 400px, #1f1135 760px, #3b1050 900px, #4c0d62 1080px, #401055 1250px, #271140 1550px);
  box-shadow: 0 0 34px rgba(0, 0, 0, .26);
}
.app { width: 47px; height: 56px; position: relative; flex: none; margin-top: -1px; }
.app svg { width: 47px; height: 56px; overflow: visible; }
.on::after { content: ""; position: absolute; left: 21.500px; top: 50px; width: 4px; height: 4px; border-radius: 50%; background: #a58bb8; }
.sep { width: 1px; height: 42px; margin: 7px 10px 0; background: #65517a; flex: none; }
.badge {
  position: absolute;
  top: 4px;
  left: 29px;
  width: 17px;
  height: 17px;
  border-radius: 9px;
  background: #ee3338;
  color: #fff;
  font-size: 9px;
  font-weight: 500;
  line-height: 17px;
  text-align: center;
}
.wide { left: 27px; width: 20px; }
.t-dec { font-size: 6.800px; font-weight: 600; fill: #fff; text-anchor: middle; }
.t-five { font-size: 22px; font-weight: 300; fill: #2c2b2b; text-anchor: middle; }
.t-ij { font: 700 13px "Liberation Mono", monospace; fill: #fff; }
.t-word { font-size: 9px; font-weight: 700; fill: #fff; text-anchor: middle; }
```
